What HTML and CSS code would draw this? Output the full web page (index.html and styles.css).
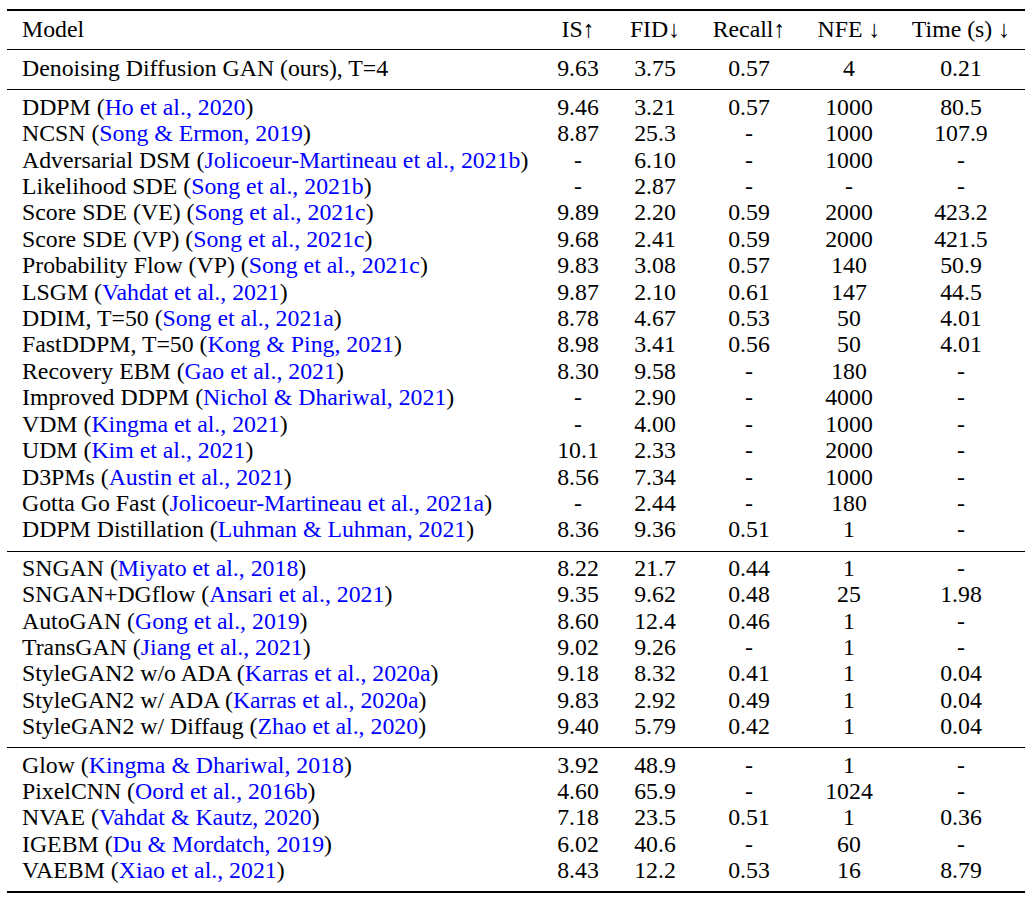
FILE: index.html
```html
<!DOCTYPE html>
<html lang="en">
<head>
<meta charset="utf-8">
<title>Results table</title>
<link rel="stylesheet" href="styles.css">
</head>
<body>
<table class="results">
  <colgroup>
    <col class="c-model">
    <col class="c-is">
    <col class="c-fid">
    <col class="c-recall">
    <col class="c-nfe">
    <col class="c-time">
  </colgroup>
  <thead>
    <tr><th class="model">Model</th><th>IS↑</th><th>FID↓</th><th>Recall↑</th><th>NFE ↓</th><th class="time">Time (s) ↓</th></tr>
  </thead>
  <tbody class="g0">
    <tr><td class="model">Denoising Diffusion GAN (ours), T=4</td><td>9.63</td><td>3.75</td><td>0.57</td><td>4</td><td class="time">0.21</td></tr>
  </tbody>
  <tbody>
    <tr><td class="model">DDPM (<span class="cite">Ho et al., 2020</span>)</td><td>9.46</td><td>3.21</td><td>0.57</td><td>1000</td><td class="time">80.5</td></tr>
    <tr><td class="model">NCSN (<span class="cite">Song &amp; Ermon, 2019</span>)</td><td>8.87</td><td>25.3</td><td>-</td><td>1000</td><td class="time">107.9</td></tr>
    <tr><td class="model">Adversarial DSM (<span class="cite">Jolicoeur-Martineau et al., 2021b</span>)</td><td>-</td><td>6.10</td><td>-</td><td>1000</td><td class="time">-</td></tr>
    <tr><td class="model">Likelihood SDE (<span class="cite">Song et al., 2021b</span>)</td><td>-</td><td>2.87</td><td>-</td><td>-</td><td class="time">-</td></tr>
    <tr><td class="model">Score SDE (VE) (<span class="cite">Song et al., 2021c</span>)</td><td>9.89</td><td>2.20</td><td>0.59</td><td>2000</td><td class="time">423.2</td></tr>
    <tr><td class="model">Score SDE (VP) (<span class="cite">Song et al., 2021c</span>)</td><td>9.68</td><td>2.41</td><td>0.59</td><td>2000</td><td class="time">421.5</td></tr>
    <tr><td class="model">Probability Flow (VP) (<span class="cite">Song et al., 2021c</span>)</td><td>9.83</td><td>3.08</td><td>0.57</td><td>140</td><td class="time">50.9</td></tr>
    <tr><td class="model">LSGM (<span class="cite">Vahdat et al., 2021</span>)</td><td>9.87</td><td>2.10</td><td>0.61</td><td>147</td><td class="time">44.5</td></tr>
    <tr><td class="model">DDIM, T=50 (<span class="cite">Song et al., 2021a</span>)</td><td>8.78</td><td>4.67</td><td>0.53</td><td>50</td><td class="time">4.01</td></tr>
    <tr><td class="model">FastDDPM, T=50 (<span class="cite">Kong &amp; Ping, 2021</span>)</td><td>8.98</td><td>3.41</td><td>0.56</td><td>50</td><td class="time">4.01</td></tr>
    <tr><td class="model">Recovery EBM (<span class="cite">Gao et al., 2021</span>)</td><td>8.30</td><td>9.58</td><td>-</td><td>180</td><td class="time">-</td></tr>
    <tr><td class="model">Improved DDPM (<span class="cite">Nichol &amp; Dhariwal, 2021</span>)</td><td>-</td><td>2.90</td><td>-</td><td>4000</td><td class="time">-</td></tr>
    <tr><td class="model">VDM (<span class="cite">Kingma et al., 2021</span>)</td><td>-</td><td>4.00</td><td>-</td><td>1000</td><td class="time">-</td></tr>
    <tr><td class="model">UDM (<span class="cite">Kim et al., 2021</span>)</td><td>10.1</td><td>2.33</td><td>-</td><td>2000</td><td class="time">-</td></tr>
    <tr><td class="model">D3PMs (<span class="cite">Austin et al., 2021</span>)</td><td>8.56</td><td>7.34</td><td>-</td><td>1000</td><td class="time">-</td></tr>
    <tr><td class="model">Gotta Go Fast (<span class="cite">Jolicoeur-Martineau et al., 2021a</span>)</td><td>-</td><td>2.44</td><td>-</td><td>180</td><td class="time">-</td></tr>
    <tr><td class="model">DDPM Distillation (<span class="cite">Luhman &amp; Luhman, 2021</span>)</td><td>8.36</td><td>9.36</td><td>0.51</td><td>1</td><td class="time">-</td></tr>
  </tbody>
  <tbody class="g2">
    <tr><td class="model">SNGAN (<span class="cite">Miyato et al., 2018</span>)</td><td>8.22</td><td>21.7</td><td>0.44</td><td>1</td><td class="time">-</td></tr>
    <tr><td class="model">SNGAN+DGflow (<span class="cite">Ansari et al., 2021</span>)</td><td>9.35</td><td>9.62</td><td>0.48</td><td>25</td><td class="time">1.98</td></tr>
    <tr><td class="model">AutoGAN (<span class="cite">Gong et al., 2019</span>)</td><td>8.60</td><td>12.4</td><td>0.46</td><td>1</td><td class="time">-</td></tr>
    <tr><td class="model">TransGAN (<span class="cite">Jiang et al., 2021</span>)</td><td>9.02</td><td>9.26</td><td>-</td><td>1</td><td class="time">-</td></tr>
    <tr><td class="model">StyleGAN2 w/o ADA (<span class="cite">Karras et al., 2020a</span>)</td><td>9.18</td><td>8.32</td><td>0.41</td><td>1</td><td class="time">0.04</td></tr>
    <tr><td class="model">StyleGAN2 w/ ADA (<span class="cite">Karras et al., 2020a</span>)</td><td>9.83</td><td>2.92</td><td>0.49</td><td>1</td><td class="time">0.04</td></tr>
    <tr><td class="model">StyleGAN2 w/ Diffaug (<span class="cite">Zhao et al., 2020</span>)</td><td>9.40</td><td>5.79</td><td>0.42</td><td>1</td><td class="time">0.04</td></tr>
  </tbody>
  <tbody class="last">
    <tr><td class="model">Glow (<span class="cite">Kingma &amp; Dhariwal, 2018</span>)</td><td>3.92</td><td>48.9</td><td>-</td><td>1</td><td class="time">-</td></tr>
    <tr><td class="model">PixelCNN (<span class="cite">Oord et al., 2016b</span>)</td><td>4.60</td><td>65.9</td><td>-</td><td>1024</td><td class="time">-</td></tr>
    <tr><td class="model">NVAE (<span class="cite">Vahdat &amp; Kautz, 2020</span>)</td><td>7.18</td><td>23.5</td><td>0.51</td><td>1</td><td class="time">0.36</td></tr>
    <tr><td class="model">IGEBM (<span class="cite">Du &amp; Mordatch, 2019</span>)</td><td>6.02</td><td>40.6</td><td>-</td><td>60</td><td class="time">-</td></tr>
    <tr><td class="model">VAEBM (<span class="cite">Xiao et al., 2021</span>)</td><td>8.43</td><td>12.2</td><td>0.53</td><td>16</td><td class="time">8.79</td></tr>
  </tbody>
</table>
</body>
</html>
```

FILE: styles.css
```css
html, body {
  margin: 0;
  padding: 0;
  background: #ffffff;
  overflow: hidden;
}

body {
  font-family: "Liberation Serif";
  font-size: 23.8px;
  color: #000000;
}

.results {
  margin: 9px 0 0 7px;
  width: 1018px;
  table-layout: fixed;
  border-collapse: collapse;
  border-top: 2px solid #000;
  border-bottom: 2px solid #000;
  font-family: "Liberation Serif";
  font-size: 23.8px;
}

.c-model { width: 533px; }
.c-is { width: 76px; }
.c-fid { width: 78px; }
.c-recall { width: 110px; }
.c-nfe { width: 90px; }
.c-time { width: 131px; }

.results th,
.results td {
  font-family: "Liberation Serif";
  font-weight: normal;
  padding: 0;
  line-height: 26.4px;
  height: 26.4px;
  text-align: center;
  white-space: nowrap;
  vertical-align: top;
}

.results .model {
  text-align: left;
  padding-left: 15px;
}

.results .time {
  padding-left: 3px;
}

.results thead th {
  padding-top: 5px;
  padding-bottom: 7px;
}

.results tbody {
  border-top: 1px solid #000;
}

.results tbody tr:first-child td {
  padding-top: 4px;
}

.results tbody tr:last-child td {
  padding-bottom: 8px;
}

.results tbody.g0 tr:first-child td {
  padding-top: 5px;
  padding-bottom: 7px;
}

.results tbody.g2 tr:first-child td {
  padding-top: 3px;
}

.results tbody.g2 tr:last-child td {
  padding-bottom: 7px;
}

.results tbody.last tr:last-child td {
  padding-bottom: 7px;
}

.cite {
  color: #0000ff;
}
```
